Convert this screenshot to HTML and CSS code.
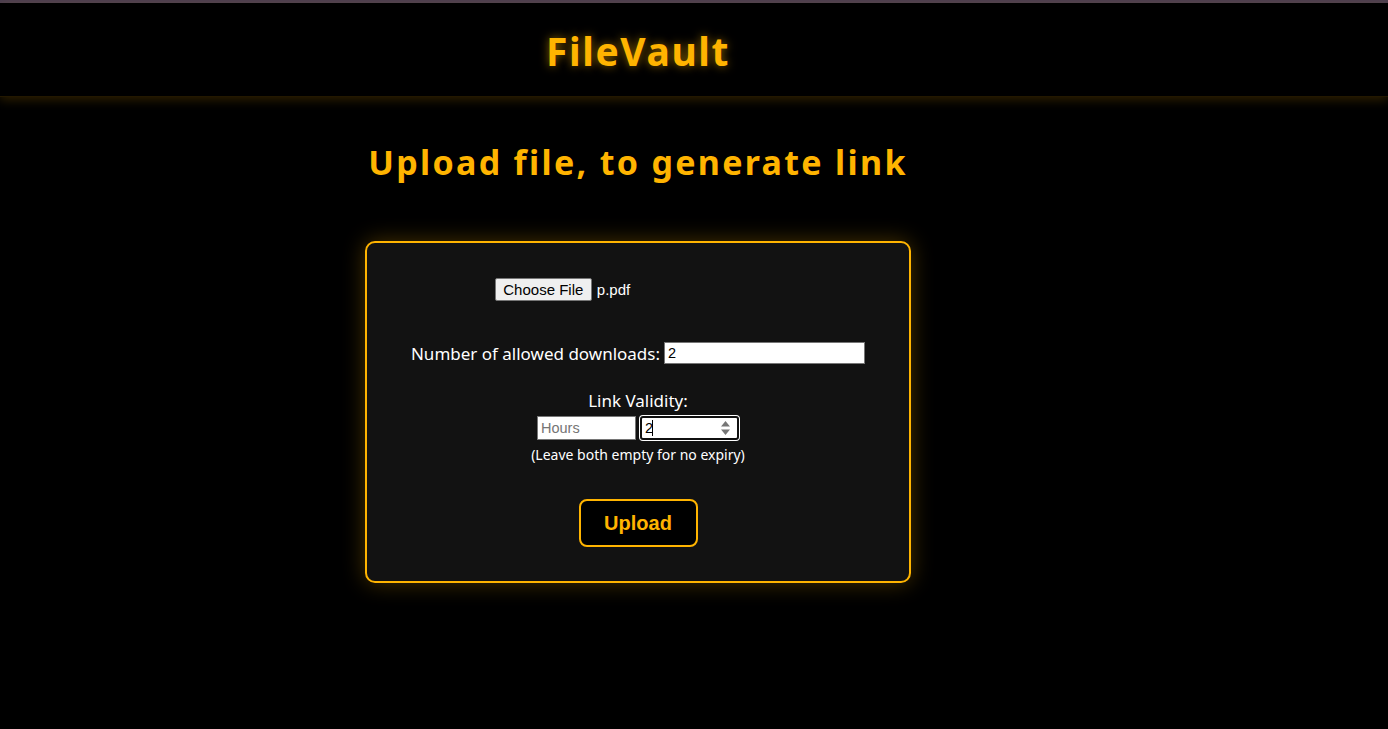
FILE: index.html
```html
<!DOCTYPE html>
<html lang="en">
<head>
<meta charset="utf-8">
<title>FileVault</title>
<link rel="stylesheet" href="styles.css">
</head>
<body>
<div class="topline"></div>
<header class="header">
  <div class="header-inner">
    <h1 class="brand">FileVault</h1>
  </div>
</header>
<main class="main">
  <h2 class="title">Upload file, to generate link</h2>
  <form class="card">
    <div class="file-row">
      <button type="button" class="native-btn">Choose File</button>
      <span class="file-name">p.pdf</span>
    </div>
    <div class="dl-row">
      <label class="label">Number of allowed downloads:</label>
      <input class="field field-wide" type="text" value="2">
    </div>
    <div class="validity">
      <div class="label">Link Validity:</div>
      <div class="validity-inputs">
        <input class="field field-small" type="text" placeholder="Hours">
        <div class="focus-wrap">
          <input class="field field-small focused" type="text" value="2">
          <span class="caret"></span>
          <svg class="spinner" width="11" height="18" viewBox="0 0 11 18"><path d="M5.5 2 L10 7.5 H1 Z" fill="#767676"/><path d="M5.5 16 L10 10.5 H1 Z" fill="#767676"/></svg>
        </div>
      </div>
      <div class="hint">(Leave both empty for no expiry)</div>
    </div>
    <button type="button" class="upload-btn">Upload</button>
  </form>
</main>
</body>
</html>
```
FILE: styles.css
```css
html, body {
  margin: 0;
  padding: 0;
  background: #000;
}
body {
  font-family: "Noto Sans", "Open Sans", sans-serif;
  color: #fff;
  min-height: 729px;
}
.topline {
  height: 3px;
  background: #4a3d4f;
}
.header {
  height: 93px;
  background: #000;
  box-shadow: 0 3px 10px rgba(255, 180, 0, 0.18);
  border-bottom: 1px solid #231800;
}
.header-inner {
  width: 1276px;
  height: 100%;
  display: flex;
  align-items: center;
  justify-content: center;
}
.brand {
  margin: 0;
  padding-top: 2px;
  font-size: 39px;
  font-weight: 700;
  letter-spacing: 1.6px;
  color: #ffb400;
  text-shadow: 0 0 10px rgba(255, 180, 0, 0.55);
}
.main {
  width: 1276px;
  display: flex;
  flex-direction: column;
  align-items: center;
}
.title {
  margin: 37px 0 0;
  font-size: 34px;
  font-weight: 700;
  letter-spacing: 2.3px;
  color: #ffb400;
  line-height: 56px;
}
.card {
  margin-top: 51px;
  width: 546px;
  height: 342px;
  box-sizing: border-box;
  background: #121212;
  border: 2px solid #ffb400;
  border-radius: 10px;
  box-shadow: 0 0 22px rgba(255, 180, 0, 0.28);
  display: flex;
  flex-direction: column;
  align-items: center;
  padding-top: 35px;
}
.file-row {
  display: flex;
  align-items: center;
  height: 23px;
  margin-left: -151px;
}
.native-btn {
  font-family: "Liberation Sans", Arial, sans-serif;
  font-size: 15px;
  color: #000;
  background: #efefef;
  border: 1px solid #767676;
  border-radius: 2px;
  height: 23px;
  width: 97px;
  padding: 0;
  margin: 0;
}
.file-name {
  font-family: "Liberation Sans", Arial, sans-serif;
  font-size: 15px;
  margin-left: 5px;
  color: #fff;
}
.dl-row {
  margin-top: 41px;
  display: flex;
  align-items: center;
  height: 22px;
}
.label {
  font-size: 17px;
  color: #fff;
}
.dl-row .label {
  margin-right: 4px;
}
.field {
  box-sizing: border-box;
  height: 22px;
  border: 1px solid #767676;
  background: #fff;
  font-family: "Liberation Sans", Arial, sans-serif;
  font-size: 14.5px;
  color: #000;
  padding: 1px 3px;
  margin: 0;
  outline: none;
}
.field::placeholder {
  color: #757575;
}
.field-wide {
  width: 201px;
}
.validity {
  margin-top: 27px;
  display: flex;
  flex-direction: column;
  align-items: center;
}
.validity .label {
  line-height: 20px;
}
.validity-inputs {
  display: flex;
  gap: 4px;
  margin-top: 5px;
}
.field-small {
  width: 99px;
  height: 24px;
}
.focus-wrap {
  position: relative;
  width: 99px;
  height: 24px;
}
.focused {
  border: 2px solid #101010;
  border-radius: 3px;
  box-shadow: 0 0 0 1px #fff;
}
.caret {
  position: absolute;
  left: 12px;
  top: 4px;
  width: 1px;
  height: 16px;
  background: #000;
}
.spinner {
  position: absolute;
  right: 8px;
  top: 3px;
}
.hint {
  margin-top: 5px;
  font-size: 14px;
  color: #fff;
}
.upload-btn {
  margin-top: 35px;
  width: 119px;
  height: 48px;
  background: #000;
  color: #ffb400;
  border: 2px solid #ffb400;
  border-radius: 8px;
  font-family: "Liberation Sans", Arial, sans-serif;
  font-size: 20px;
  font-weight: 700;
  padding: 0;
}
```
